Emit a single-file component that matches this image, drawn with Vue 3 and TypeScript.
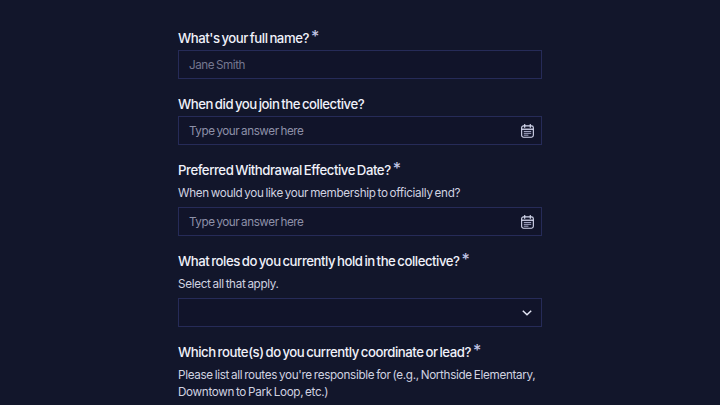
<script setup lang="ts">
interface Field {
  label: string
  required: boolean
  help?: string
  placeholder?: string
  kind: 'text' | 'date' | 'select' | 'none'
}
const fields: Field[] = [
  { label: "What's your full name?", required: true, placeholder: 'Jane Smith', kind: 'text' },
  { label: 'When did you join the collective?', required: false, placeholder: 'Type your answer here', kind: 'date' },
  { label: 'Preferred Withdrawal Effective Date?', required: true, help: 'When would you like your membership to officially end?', placeholder: 'Type your answer here', kind: 'date' },
  { label: 'What roles do you currently hold in the collective?', required: true, help: 'Select all that apply.', kind: 'select' },
  { label: 'Which route(s) do you currently coordinate or lead?', required: true, help: "Please list all routes you're responsible for (e.g., Northside Elementary, Downtown to Park Loop, etc.)", kind: 'none' }
]
</script>

<template>
  <main class="page">
    <form class="form">
      <div v-for="f in fields" :key="f.label" class="field">
        <div class="label">{{ f.label }}<span v-if="f.required" class="star">*</span></div>
        <p v-if="f.help" class="help">{{ f.help }}</p>
        <div v-if="f.kind !== 'none'" class="input">
          <span class="ph" :class="{ name: f.kind === 'text' }">{{ f.placeholder }}</span>
          <svg v-if="f.kind === 'date'" class="cal" width="13" height="14" viewBox="0 0 14 15" fill="none">
            <rect x="0.7" y="2" width="12.6" height="12.2" rx="2" stroke="#d5d8ee" stroke-width="1.2" />
            <path d="M0.7 5.6h12.6" stroke="#d5d8ee" stroke-width="1.4" />
            <path d="M4 0.5v3M10 0.5v3" stroke="#d5d8ee" stroke-width="1.3" stroke-linecap="round" />
            <path d="M3 8h8M3 10h8M3 12h5" stroke="#b4b8d6" stroke-width="1" />
          </svg>
          <svg v-if="f.kind === 'select'" class="chev" width="10" height="6" viewBox="0 0 10 6" fill="none">
            <path d="M0.8 0.8 5 4.8 9.2 0.8" stroke="#e4e6f5" stroke-width="1.5" />
          </svg>
        </div>
      </div>
    </form>
  </main>
</template>

<style scoped>
.page {
  width: 720px;
  height: 405px;
  overflow: hidden;
  background: #12162b;
  font-family: Inter, "Noto Sans", sans-serif;
  display: flex;
  justify-content: center;
}
.form {
  width: 364px;
  padding-top: 26px;
  display: flex;
  flex-direction: column;
  gap: 13px;
}
.field {
  display: flex;
  flex-direction: column;
}
.label {
  height: 24px;
  font-size: 13.2px;
  font-weight: 450;
  line-height: 24px;
  letter-spacing: -0.46px;
  word-spacing: -1.2px;
  color: #f0f1fa;
  white-space: nowrap;
}
.star {
  font-size: 16px;
  margin-left: 2px;
  color: #c0c4e4;
  line-height: 0;
  position: relative;
  top: -1px;
}
.help {
  margin: 0;
  font-size: 11.7px;
  line-height: 17px;
  letter-spacing: -0.33px;
  word-spacing: -1px;
  color: #d0d2e0;
  padding-top: 3px;
  padding-bottom: 5px;
}
.input {
  height: 29px;
  box-sizing: border-box;
  border: 1px solid #262b58;
  background: #11142a;
  display: flex;
  align-items: center;
  justify-content: space-between;
  padding: 0 7px 0 10px;
}
.ph {
  font-size: 11.7px;
  letter-spacing: -0.45px;
  word-spacing: -1px;
  color: #8d90a8;
}
.ph.name {
  color: #74778f;
}
.chev {
  margin-right: 2px;
}
</style>
